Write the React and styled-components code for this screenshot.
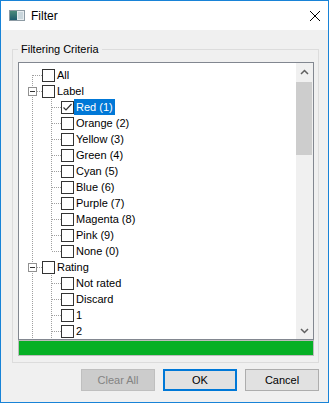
import styled, { createGlobalStyle } from "styled-components";

const GlobalStyle = createGlobalStyle`
  html, body {
    margin: 0;
    padding: 0;
    background: #fff;
  }
  body {
    font-family: "Liberation Sans", Arial, sans-serif;
    color: #000;
  }
`;

const Window = styled.div`
  width: 327px;
  height: 401px;
  border: 1px solid #1883d7;
  background: #f0f0f0;
  display: flex;
  flex-direction: column;
`;

const TitleBar = styled.div`
  height: 29px;
  flex: none;
  background: #fff;
  display: flex;
  align-items: center;
  padding: 0 8px;
  gap: 6px;
`;

const Title = styled.span`
  flex: 1;
  font-size: 12px;
`;

const Body = styled.div`
  flex: 1;
  display: flex;
  flex-direction: column;
  padding: 0 9px 10px 11px;
`;

const Group = styled.fieldset`
  margin: 13px 0 0;
  padding: 6px 4px 6px 5px;
  border: 1px solid #dcdcdc;
  min-width: 0;

  legend {
    padding: 0 3px;
    font-size: 11px;
    line-height: 13px;
  }
`;

const Tree = styled.div`
  height: 278px;
  box-sizing: border-box;
  border: 1px solid #828790;
  background: #fff;
  display: flex;
`;

const List = styled.div`
  flex: 1;
  padding-top: 4px;
  overflow: hidden;
`;

const Row = styled.div`
  height: 16px;
  display: flex;
  align-items: center;
  padding-left: 4px;
  font-size: 11px;
`;

const dotV = "repeating-linear-gradient(to bottom, #a0a0a0 0 1px, transparent 1px 2px)";
const dotH = "repeating-linear-gradient(to right, #a0a0a0 0 1px, transparent 1px 2px)";

const vPos = { full: "9px 0", top: "9px 0", bottom: "9px 8px" };
const vSize = { full: "1px 16px", top: "1px 8px", bottom: "1px 8px" };

const Connector = styled.span`
  flex: none;
  width: 19px;
  align-self: stretch;
  display: flex;
  align-items: center;
  justify-content: center;
  background-repeat: no-repeat;
  background-image: ${(p) =>
    [p.$v !== "none" && dotV, p.$h && dotH].filter(Boolean).join(", ") || "none"};
  background-position: ${(p) =>
    [p.$v !== "none" && vPos[p.$v], p.$h && "10px 8px"].filter(Boolean).join(", ") || "0 0"};
  background-size: ${(p) =>
    [p.$v !== "none" && vSize[p.$v], p.$h && "9px 1px"].filter(Boolean).join(", ") || "auto"};
`;

const Expander = styled.span`
  width: 9px;
  height: 9px;
  box-sizing: border-box;
  border: 1px solid #919191;
  background: #fff;
  display: flex;
  align-items: center;
  justify-content: center;

  &::before {
    content: "";
    width: 5px;
    height: 1px;
    background: #333;
  }
`;

const Box = styled.span`
  flex: none;
  width: 13px;
  height: 13px;
  box-sizing: border-box;
  border: 1px solid #333;
  background: #fff;
  display: flex;
  align-items: center;
  justify-content: center;
`;

const Label = styled.span`
  padding: 0 2px;
  line-height: 16px;
  white-space: nowrap;
  background: ${(p) => (p.$selected ? "#0078d7" : "transparent")};
  color: ${(p) => (p.$selected ? "#fff" : "#000")};
`;

const Scrollbar = styled.div`
  width: 17px;
  flex: none;
  background: #f0f0f0;
  display: flex;
  flex-direction: column;
`;

const Arrow = styled.div`
  height: 17px;
  flex: none;
  display: flex;
  align-items: center;
  justify-content: center;
`;

const Track = styled.div`
  flex: 1;
  padding: 2px 1px 0 0;
`;

const Thumb = styled.div`
  height: 73px;
  background: #cdcdcd;
`;

const Progress = styled.div`
  height: 16px;
  box-sizing: border-box;
  border: 1px solid #bcbcbc;
  background: #06b025;
`;

const Buttons = styled.div`
  margin-top: 6px;
  display: flex;
  justify-content: flex-end;
  gap: 8px;
`;

const Button = styled.button`
  width: 74px;
  height: 22px;
  box-sizing: border-box;
  font-family: inherit;
  font-size: 11px;
  padding: 0;
  background: ${(p) => (p.disabled ? "#cccccc" : "#e1e1e1")};
  color: ${(p) => (p.disabled ? "#838383" : "#000")};
  border: ${(p) =>
    p.$default ? "2px solid #0078d7" : p.disabled ? "1px solid #bfbfbf" : "1px solid #adadad"};
`;

const labels = ["Red (1)", "Orange (2)", "Yellow (3)", "Green (4)", "Cyan (5)", "Blue (6)", "Purple (7)", "Magenta (8)", "Pink (9)", "None (0)"];
const ratings = ["Not rated", "Discard", "1", "2"];

const rows = [
  { text: "All", level: 0, v: "bottom" },
  { text: "Label", level: 0, v: "full", expander: true },
  ...labels.map((text, i) => ({
    text,
    level: 1,
    v: i === labels.length - 1 ? "top" : "full",
    checked: i === 0,
    selected: i === 0,
  })),
  { text: "Rating", level: 0, v: "full", expander: true },
  ...ratings.map((text) => ({ text, level: 1, v: "full" })),
];

const WindowIcon = () => (
  <svg width="16" height="11" viewBox="0 0 16 11">
    <defs>
      <linearGradient id="pane" x1="0" y1="0" x2="0" y2="1">
        <stop offset="0" stopColor="#4b8a7a" />
        <stop offset="1" stopColor="#1f5c6e" />
      </linearGradient>
    </defs>
    <rect x="0.5" y="0.5" width="15" height="10" fill="#e6ecef" stroke="#8c9aa3" />
    <rect x="1" y="1" width="7" height="9" fill="url(#pane)" />
    <rect x="9" y="2" width="5" height="7" fill="#c9d6dc" />
  </svg>
);

const CloseIcon = () => (
  <svg width="10" height="10" viewBox="0 0 10 10">
    <path d="M0 0 L10 10 M10 0 L0 10" stroke="#000" strokeWidth="1" />
  </svg>
);

const Check = () => (
  <svg width="11" height="11" viewBox="0 0 11 11">
    <path d="M1.5 5.5 L4 8 L9.5 2" fill="none" stroke="#333" strokeWidth="1.2" />
  </svg>
);

const Chevron = ({ up }) => (
  <svg width="9" height="6" viewBox="0 0 9 6">
    <path
      d={up ? "M1 5 L4.5 1.5 L8 5" : "M1 1 L4.5 4.5 L8 1"}
      fill="none"
      stroke="#606060"
      strokeWidth="1.5"
    />
  </svg>
);

const TreeRow = ({ row }) => (
  <Row>
    {row.level === 0 ? (
      <Connector $v={row.v} $h>
        {row.expander && <Expander />}
      </Connector>
    ) : (
      <>
        <Connector $v="full" />
        <Connector $v={row.v} $h />
      </>
    )}
    <Box>{row.checked && <Check />}</Box>
    <Label $selected={row.selected}>{row.text}</Label>
  </Row>
);

const App = () => {
  return (
    <>
      <GlobalStyle />
      <Window>
        <TitleBar>
          <WindowIcon />
          <Title>Filter</Title>
          <CloseIcon />
        </TitleBar>
        <Body>
          <Group>
            <legend>Filtering Criteria</legend>
            <Tree>
              <List>
                {rows.map((row) => (
                  <TreeRow key={row.text} row={row} />
                ))}
              </List>
              <Scrollbar>
                <Arrow>
                  <Chevron up />
                </Arrow>
                <Track>
                  <Thumb />
                </Track>
                <Arrow>
                  <Chevron />
                </Arrow>
              </Scrollbar>
            </Tree>
            <Progress />
          </Group>
          <Buttons>
            <Button disabled>Clear All</Button>
            <Button $default>OK</Button>
            <Button>Cancel</Button>
          </Buttons>
        </Body>
      </Window>
    </>
  );
};

export default App;
